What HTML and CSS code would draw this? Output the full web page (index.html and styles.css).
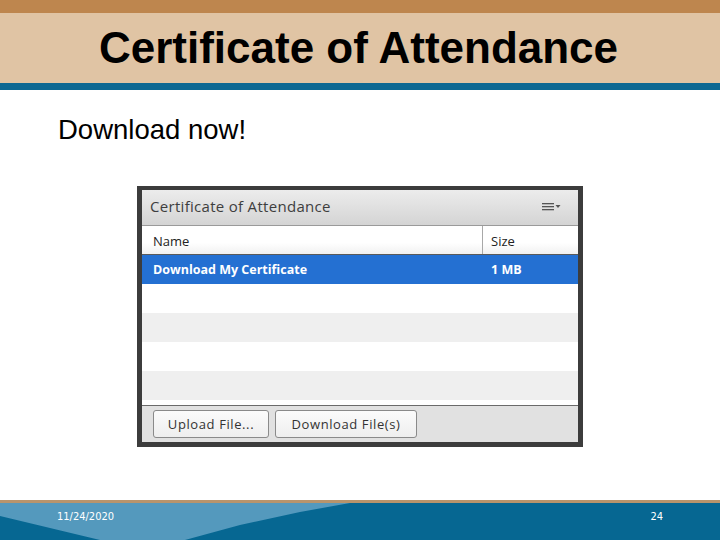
FILE: index.html
```html
<!DOCTYPE html>
<html>
<head>
<meta charset="utf-8">
<link rel="stylesheet" href="styles.css">
</head>
<body>
<div class="slide">
  <div class="topbar"></div>
  <div class="titlebar"><h1 class="title">Certificate of Attendance</h1></div>
  <div class="rule"></div>
  <main class="content">
    <p class="lead">Download now!</p>
    <div class="panel">
      <div class="panel-head">
        <span class="panel-title">Certificate of Attendance</span>
        <svg class="menu-icon" width="20" height="10" viewBox="0 0 20 10">
          <rect x="0" y="1" width="12" height="1.3" fill="#555"/>
          <rect x="0" y="4" width="12" height="1.3" fill="#555"/>
          <rect x="0" y="7" width="12" height="1.3" fill="#555"/>
          <path d="M13.5 3 L18.5 3 L16 6 Z" fill="#555"/>
        </svg>
      </div>
      <div class="cols">
        <div class="col-name">Name</div>
        <div class="col-size">Size</div>
      </div>
      <div class="rows">
        <div class="row selected"><div class="col-name">Download My Certificate</div><div class="col-size">1 MB</div></div>
        <div class="row"></div>
        <div class="row alt"></div>
        <div class="row"></div>
        <div class="row alt"></div>
        <div class="row-rest"></div>
      </div>
      <div class="toolbar">
        <button class="btn btn-upload">Upload File...</button>
        <button class="btn btn-download">Download File(s)</button>
      </div>
    </div>
  </main>
  <footer class="footer">
    <span class="date">11/24/2020</span>
    <span class="page">24</span>
  </footer>
</div>
</body>
</html>
```

FILE: styles.css
```css
* { box-sizing: border-box; }
html, body { margin: 0; padding: 0; }
body { background: #fff; font-family: "Liberation Sans", Arial, sans-serif; }
.slide { width: 720px; height: 540px; display: flex; flex-direction: column; overflow: hidden; }
.topbar { height: 13px; background: #be864e; }
.titlebar { height: 70px; background: #e0c4a4; display: flex; align-items: center; justify-content: center; }
.title { margin: 0; font-family: "Liberation Sans", Arial, sans-serif; font-weight: bold; font-size: 44px; color: #000; line-height: 1; padding-right: 3px; }
.rule { height: 7px; background: #0e6892; }
.content { flex: 1; padding: 24px 0 0 58px; }
.lead { margin: 0; font-size: 27.5px; line-height: 31px; color: #000; }
.panel { margin: 41px 0 0 79px; width: 446px; height: 261px; border: 5px solid #3c3c3c; border-top-width: 4px; background: #fff; display: flex; flex-direction: column; font-family: "Open Sans", "DejaVu Sans", sans-serif; }
.panel-head { height: 36px; background: linear-gradient(#ececec, #d4d4d4); border-bottom: 1px solid #9a9a9a; display: flex; align-items: center; justify-content: space-between; padding: 0 16px 3px 8px; }
.panel-title { font-size: 15px; color: #3e3e3e; letter-spacing: 0.3px; }
.menu-icon { display: block; margin-top: 1px; }
.cols { height: 29px; display: flex; background: linear-gradient(#ffffff 60%, #f1f1f1); border-bottom: 1px solid #5a5a5a; font-size: 13px; color: #222; }
.col-name { width: 341px; padding-left: 11px; display: flex; align-items: center; }
.cols .col-name { border-right: 1px solid #a8a8a8; padding-top: 2px; }
.cols .col-size { padding-top: 2px; }
.col-size { flex: 1; padding-left: 8px; display: flex; align-items: center; }
.rows { flex: 1; display: flex; flex-direction: column; }
.row { height: 29px; display: flex; background: #fff; }
.row.alt { background: #efefef; }
.row.selected { background: #2470d2; color: #fff; font-weight: bold; font-size: 12.5px; }
.row-rest { flex: 1; background: #fff; }
.toolbar { height: 37px; border-top: 1px solid #6a6a6a; background: #e1e1e1; display: flex; align-items: center; gap: 6px; padding: 0 0 0 11px; }
.btn { height: 28px; border: 1px solid #8a8a8a; border-radius: 3px; background: linear-gradient(#fbfbfb, #eeeeee); font-family: "Open Sans", "DejaVu Sans", sans-serif; font-size: 13px; color: #333; letter-spacing: 0.6px; padding: 0; margin: 0; }
.btn-upload { width: 116px; }
.btn-download { width: 142px; }
.footer { height: 40px; position: relative; border-top: 3px solid #b8946c; background: #066792; display: flex; align-items: center; justify-content: space-between; padding: 0 57px 10px 57px; color: #fff; font-family: "DejaVu Sans Condensed", "DejaVu Sans", sans-serif; font-size: 11px; }
.footer::before { content: ""; position: absolute; left: 0; top: 0; width: 360px; height: 37px; background: #5499bd; clip-path: polygon(0 0, 350px 0, 300px 9px, 240px 22px, 185px 37px, 100px 37px, 0 13px); }
.date, .page { position: relative; }
```
